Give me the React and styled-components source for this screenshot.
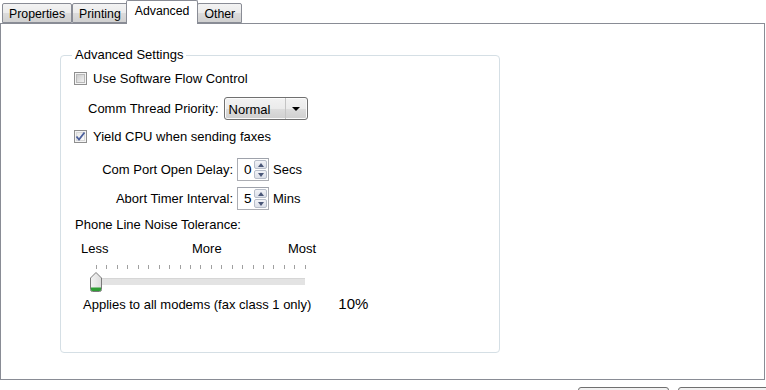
import React from "react";
import styled, { createGlobalStyle } from "styled-components";

const GlobalStyle = createGlobalStyle`
  html, body {
    margin: 0;
    padding: 0;
    background: #fff;
  }
  body {
    font-family: "Liberation Sans", Arial, sans-serif;
    font-size: 13px;
    color: #000;
    overflow: hidden;
  }
`;

const Window = styled.div`
  width: 766px;
  height: 390px;
  overflow: hidden;
`;

const TabStrip = styled.div`
  display: flex;
  align-items: flex-end;
  height: 24px;
  padding-left: 2px;
  position: relative;
  z-index: 1;
`;

const Tab = styled.div`
  box-sizing: border-box;
  display: flex;
  align-items: center;
  height: ${(p) => (p.$active ? "24px" : "20px")};
  margin-bottom: ${(p) => (p.$active ? "0" : "1px")};
  margin-left: ${(p) => (p.$active ? "-2px" : "0")};
  margin-right: ${(p) => (p.$active ? "-1px" : "0")};
  padding: ${(p) => (p.$active ? "0 8px 3px" : "1px 6px 0")};
  border: 1px solid #898c95;
  border-bottom: ${(p) => (p.$active ? "none" : "1px solid #898c95")};
  border-radius: 2px 2px 0 0;
  background: ${(p) =>
    p.$active ? "#fff" : "linear-gradient(#f3f3f3, #ebebeb 50%, #dcdcdc 50%, #d0d0d0)"};
  position: relative;
  z-index: ${(p) => (p.$active ? 2 : 0)};
  white-space: nowrap;
  font-size: 12.3px;
  & + & {
    border-left: ${(p) => (p.$active ? "1px solid #898c95" : "none")};
  }
`;

const Panel = styled.div`
  box-sizing: border-box;
  width: 765px;
  height: 357px;
  margin-top: -1px;
  border: 1px solid #898c95;
  padding-left: 59px;
  background: #fff;
`;

const Group = styled.fieldset`
  box-sizing: border-box;
  width: 440px;
  height: 305px;
  margin: 24px 0 0 0;
  padding: 0;
  min-width: 0;
  border: 1px solid #d5dfe5;
  border-radius: 4px;
`;

const Legend = styled.legend`
  margin-left: 11px;
  padding: 0 3px;
  line-height: 14px;
`;

const Content = styled.div`
  display: flex;
  flex-direction: column;
  padding: 8px 0 0 13px;
`;

const CheckRow = styled.label`
  display: flex;
  align-items: center;
  gap: 6px;
  height: 16px;
  margin-top: ${(p) => p.$mt || 0}px;
`;

const Box = styled.span`
  box-sizing: border-box;
  position: relative;
  width: 13px;
  height: 13px;
  border: 1px solid #8f8f8f;
  background: #f4f4f4;
  display: flex;
  align-items: center;
  justify-content: center;
  &::before {
    content: "";
    position: absolute;
    inset: 1px;
    background: ${(p) =>
      p.$checked
        ? "linear-gradient(135deg, #e9e9e9, #fbfbfb)"
        : "linear-gradient(135deg, #cbcbcb, #f2f2f2)"};
    border: 1px solid ${(p) => (p.$checked ? "#d8d8d8" : "#b9b9b9")};
    box-sizing: border-box;
  }
  svg {
    position: relative;
  }
`;

const Checkbox = ({ checked }) => (
  <Box $checked={checked}>
    {checked && (
      <svg width="11" height="11" viewBox="0 0 11 11">
        <path d="M1.5 5.5 L4 8.5 L9.5 1.5" fill="none" stroke="#4b5f9c" strokeWidth="1.8" />
      </svg>
    )}
  </Box>
);

const FieldRow = styled.div`
  display: flex;
  align-items: center;
  gap: 5px;
  height: 23px;
  margin-top: 11px;
  padding-left: 14px;
`;

const Select = styled.div`
  box-sizing: border-box;
  display: flex;
  width: 84px;
  height: 23px;
  border: 1px solid #707070;
  border-radius: 3px;
  background: linear-gradient(#f2f2f2, #ebebeb 50%, #dddddd 50%, #cfcfcf);
  box-shadow: inset 0 0 0 1px #fbfbfb;
`;

const SelectValue = styled.span`
  flex: 1;
  display: flex;
  align-items: center;
  padding-left: 4px;
  padding-top: 1px;
`;

const SelectArrow = styled.span`
  width: 21px;
  display: flex;
  align-items: center;
  justify-content: center;
  border-left: 1px solid #c4c4c4;
  &::after {
    content: "";
    border-left: 4.5px solid transparent;
    border-right: 4.5px solid transparent;
    border-top: 4.5px solid #000;
  }
`;

const SpinGrid = styled.div`
  display: grid;
  grid-template-columns: 159px 32px auto;
  grid-auto-rows: 23px;
  column-gap: 4px;
  row-gap: 6px;
  align-items: center;
  margin-top: 14px;
`;

const SpinLabel = styled.span`
  text-align: right;
`;

const Spin = styled.div`
  box-sizing: border-box;
  display: flex;
  height: 23px;
  border: 1px solid #abadb3;
  border-top-color: #9ea2ab;
  background: #fff;
`;

const SpinValue = styled.span`
  flex: 1;
  display: flex;
  align-items: center;
  padding-left: 6px;
  font-size: 13.5px;
`;

const SpinButtons = styled.div`
  width: 13px;
  display: flex;
  flex-direction: column;
  padding: 1px 1px 1px 0;
  gap: 1px;
`;

const SpinButton = styled.span`
  flex: 1;
  display: flex;
  align-items: center;
  justify-content: center;
  border: 1px solid #b7bdc9;
  border-radius: 2px;
  background: linear-gradient(#f2f3f7, #dbdfe8);
  &::after {
    content: "";
    border-left: 3.5px solid transparent;
    border-right: 3.5px solid transparent;
    ${(p) => (p.$down ? "border-top: 4px solid #4a5778;" : "border-bottom: 4px solid #4a5778;")}
  }
`;

const SpinBox = ({ value }) => (
  <Spin>
    <SpinValue>{value}</SpinValue>
    <SpinButtons>
      <SpinButton />
      <SpinButton $down />
    </SpinButtons>
  </Spin>
);

const Caption = styled.div`
  margin-top: 8px;
  margin-left: 1px;
  line-height: 14px;
`;

const ScaleLabels = styled.div`
  display: grid;
  grid-template-columns: 111px 96px auto;
  margin-top: 10px;
  padding-left: 7px;
  line-height: 14px;
`;

const Ticks = styled.div`
  display: flex;
  justify-content: space-between;
  width: 210px;
  height: 4px;
  margin: 9px 0 0 22px;
`;

const Tick = styled.span`
  width: 1px;
  height: 4px;
  background: #a0a0a0;
`;

const Track = styled.div`
  position: relative;
  box-sizing: border-box;
  width: 209px;
  height: 7px;
  margin: 9px 0 0 22px;
  background: #e3e3e3;
  border-top: 1px solid #d6d6d6;
`;

const Thumb = styled.svg`
  position: absolute;
  left: -6px;
  top: -7px;
`;

const Footer = styled.div`
  display: flex;
  align-items: baseline;
  margin-top: 12px;
  padding-left: 9px;
  line-height: 14px;
`;

const Percent = styled.span`
  margin-left: 27px;
  font-size: 15px;
`;

const ButtonRow = styled.div`
  display: flex;
  justify-content: flex-end;
  gap: 9px;
  margin-top: 7px;
  margin-right: -3px;
`;

const Button = styled.button`
  box-sizing: border-box;
  width: 91px;
  height: 23px;
  border: 1px solid #707070;
  border-radius: 3px;
  background: linear-gradient(#f2f2f2, #ebebeb 50%, #dddddd 50%, #cfcfcf);
  font: inherit;
  color: #000;
`;

const tabs = ["Properties", "Printing", "Advanced", "Other"];

export default function App() {
  return (
    <Window>
      <GlobalStyle />
      <TabStrip>
        {tabs.map((t) => (
          <Tab key={t} $active={t === "Advanced"}>
            {t}
          </Tab>
        ))}
      </TabStrip>
      <Panel>
        <Group>
          <Legend>Advanced Settings</Legend>
          <Content>
            <CheckRow>
              <Checkbox />
              Use Software Flow Control
            </CheckRow>
            <FieldRow>
              Comm Thread Priority:
              <Select>
                <SelectValue>Normal</SelectValue>
                <SelectArrow />
              </Select>
            </FieldRow>
            <CheckRow $mt={8}>
              <Checkbox checked />
              Yield CPU when sending faxes
            </CheckRow>
            <SpinGrid>
              <SpinLabel>Com Port Open Delay:</SpinLabel>
              <SpinBox value="0" />
              <span>Secs</span>
              <SpinLabel>Abort Timer Interval:</SpinLabel>
              <SpinBox value="5" />
              <span>Mins</span>
            </SpinGrid>
            <Caption>Phone Line Noise Tolerance:</Caption>
            <ScaleLabels>
              <span>Less</span>
              <span>More</span>
              <span>Most</span>
            </ScaleLabels>
            <Ticks>
              {Array.from({ length: 21 }, (_, i) => (
                <Tick key={i} />
              ))}
            </Ticks>
            <Track>
              <Thumb width="12" height="20" viewBox="0 0 12 20">
                <defs>
                  <linearGradient id="thumbFill" x1="0" y1="0" x2="1" y2="0">
                    <stop offset="0" stopColor="#f4f4f4" />
                    <stop offset="1" stopColor="#dcdcdc" />
                  </linearGradient>
                </defs>
                <path
                  d="M0.5 6 L6 0.5 L11.5 6 L11.5 17.5 Q11.5 19.5 9.5 19.5 L2.5 19.5 Q0.5 19.5 0.5 17.5 Z"
                  fill="url(#thumbFill)"
                  stroke="#7a7a7a"
                />
                <path d="M1 15.5 L11 15.5 L11 17.5 Q11 19 9.5 19 L2.5 19 Q1 19 1 17.5 Z" fill="#2f9d35" />
              </Thumb>
            </Track>
            <Footer>
              Applies to all modems (fax class 1 only)
              <Percent>10%</Percent>
            </Footer>
          </Content>
        </Group>
      </Panel>
      <ButtonRow>
        <Button aria-label="OK" />
        <Button aria-label="Cancel" />
      </ButtonRow>
    </Window>
  );
}
